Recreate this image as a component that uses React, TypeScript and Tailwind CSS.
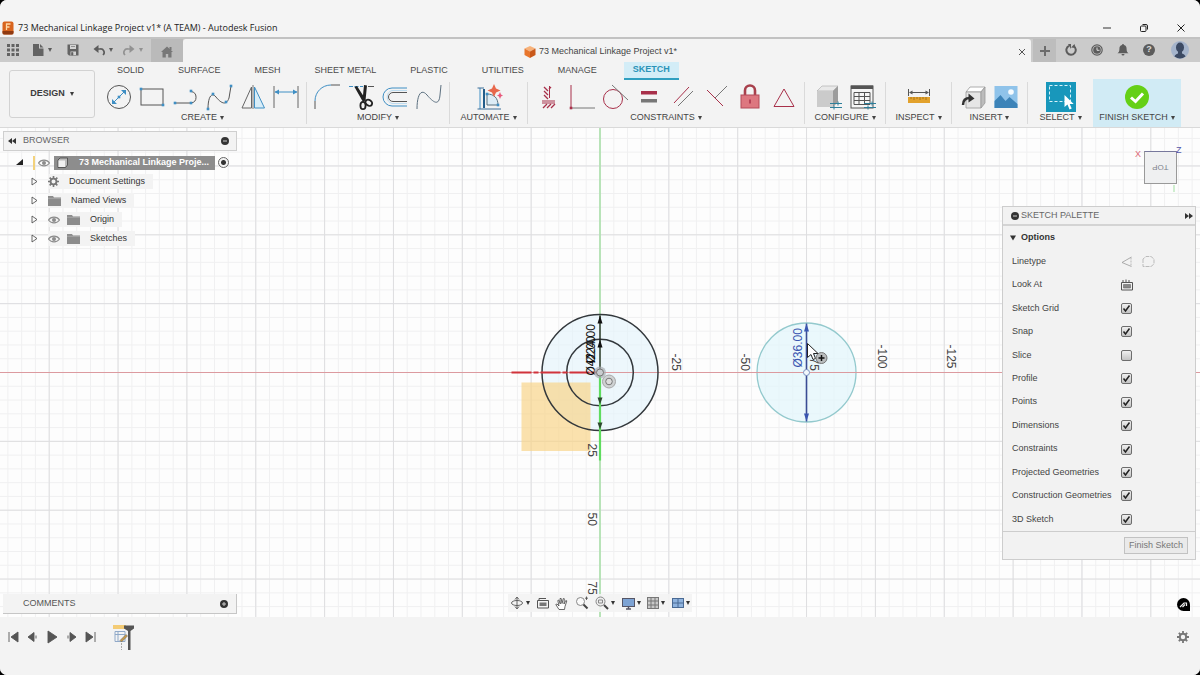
import { useState } from "react";
import type { ReactNode } from "react";

const CELL = 13.77;
const REACH = 1652;
const BLUE = "#3f8fc4";
const CRIMSON = "#a8304a";

type Tool = { id: string; art: ReactNode };
type Group = { label: string; box: string; tools: Tool[] };

const gridPath = (step: number): string => {
  const parts: string[] = [];
  for (let p = 0; p <= REACH; p += step) {
    parts.push(`M${p} -${REACH}V${REACH}M-${p} -${REACH}V${REACH}M-${REACH} ${p}H${REACH}M-${REACH} -${p}H${REACH}`);
  }
  return parts.join("");
};
const minorGrid = gridPath(CELL);
const majorGrid = gridPath(CELL * 5);

const tabs = ["SOLID", "SURFACE", "MESH", "SHEET METAL", "PLASTIC", "UTILITIES", "MANAGE", "SKETCH"];

const dot = (x: number, y: number, fill = BLUE) => <rect x={x - 1.3} y={y - 1.3} width="2.6" height="2.6" fill={fill} />;

const groups: Group[] = [
  {
    label: "CREATE",
    box: "w-[208px] px-[6px]",
    tools: [
      {
        id: "Circle",
        art: (
          <>
            <circle cx="14" cy="14" r="11.5" stroke="#555" />
            <path d="M8 20L20 8" stroke={BLUE} />
            <path d="M7 21v-5l5 5zM21 7v5l-5-5z" fill={BLUE} />
            {dot(14, 14)}
          </>
        ),
      },
      {
        id: "Rectangle",
        art: (
          <>
            <rect x="3" y="6" width="22" height="16" stroke="#555" />
            {dot(3, 6)}
            {dot(25, 22)}
          </>
        ),
      },
      {
        id: "Line",
        art: (
          <>
            <path d="M3 20H19" stroke="#555" />
            <path d="M19 8.500A5.800 5.800 0 0 1 19 20" stroke="#555" />
            {dot(3, 20)}
            {dot(19, 20)}
            {dot(19, 8)}
          </>
        ),
      },
      {
        id: "Spline",
        art: (
          <>
            <path d="M3 26C3 13 7 9 11 14S21 24 24 15L26 3" stroke="#555" />
            {dot(3, 26)}
            {dot(8, 11)}
            {dot(21, 19)}
            {dot(26, 3)}
          </>
        ),
      },
      {
        id: "Mirror",
        art: (
          <>
            <path d="M12.500 4V25H3z" stroke="#666" />
            <path d="M15.500 4V25H25.500z" stroke={BLUE} fill="#d8edf8" />
            <path d="M14 2V26" stroke="#777" />
          </>
        ),
      },
      {
        id: "Dimension",
        art: (
          <>
            <path d="M2 3V25M26 3V25" stroke="#666" />
            <path d="M3 9H25" stroke={BLUE} />
            <path d="M2.500 9l4.500-2.500v5zM25.500 9l-4.500-2.500v5z" fill={BLUE} />
          </>
        ),
      },
    ],
  },
  {
    label: "MODIFY",
    box: "w-[143px] px-[6px]",
    tools: [
      {
        id: "Fillet",
        art: (
          <>
            <path d="M2 26V18" stroke="#555" />
            <path d="M2 18C2 9 9 2 18 2" stroke={BLUE} />
            <path d="M18 2H27" stroke="#555" />
          </>
        ),
      },
      {
        id: "Trim",
        art: (
          <>
            <path d="M2 3.500H16" stroke={BLUE} strokeDasharray="4 1.500" />
            <path d="M21 3.500H27" stroke="#555" />
            <path d="M7.500 4L10 3l9 14-3 2zM17 2l3 .5-1.500 15h-3z" fill="#222" />
            <ellipse cx="16" cy="22.500" rx="2.600" ry="3.600" stroke="#222" strokeWidth="1.800" />
            <ellipse cx="21.800" cy="19.800" rx="3.600" ry="2.800" transform="rotate(35 21.800 19.800)" stroke="#222" strokeWidth="1.800" />
          </>
        ),
      },
      {
        id: "Offset",
        art: (
          <>
            <path d="M26 5H11A9 9 0 0 0 11 23H26" stroke={BLUE} />
            <path d="M26 9.500H12A4.500 4.500 0 0 0 12 18.500H26" stroke="#555" />
            <path d="M26 7.500H11A6.800 6.800 0 0 0 11 20.500H26" stroke="#bddcf0" />
          </>
        ),
      },
      { id: "Edit curve", art: <path d="M2 26C2 12 6 5 12 12S24 24 25 12L26 2" stroke="#5c7080" /> },
    ],
  },
  {
    label: "AUTOMATE",
    box: "w-[78px] px-[25px]",
    tools: [
      {
        id: "AutoConstrain",
        art: (
          <>
            <path d="M5 5V26" stroke={BLUE} />
            <path d="M2.500 5H9M2.500 26H26" stroke="#3d6f98" />
            <path d="M9 6V25" stroke="#235d8a" strokeWidth="2" />
            <path d="M12 11C19 11 23 15 23 22H12z" stroke="#58707f" fill="#dcecf6" />
            {dot(12, 11)}
            {dot(23, 22)}
            <path d="M19 1l2 4.500 4.500 2-4.500 2L19 14l-2-4.500-4.500-2 4.500-2z" fill="#e8684c" />
            <path d="M25 9l1 2.500 2 1-2 1-1 2.500-1-2.500-2-1 2-1z" fill="#e85a7c" />
          </>
        ),
      },
    ],
  },
  {
    label: "CONSTRAINTS",
    box: "w-[277px] px-[6px]",
    tools: [
      {
        id: "Horizontal/Vertical",
        art: (
          <>
            <path d="M15.500 3V15M8 18H21M8 20H21" stroke={CRIMSON} />
            <path d="M10 4l4 4M10 8l4 4M10 12l4 4M17 4l-2 2M9 25l4-4M13 25l4-4M17 25l4-4" stroke={CRIMSON} strokeWidth="1.300" />
          </>
        ),
      },
      {
        id: "Coincident",
        art: (
          <>
            <path d="M3 2V25" stroke={CRIMSON} />
            <path d="M3 25H27" stroke="#777" />
            {dot(3, 25, CRIMSON)}
          </>
        ),
      },
      {
        id: "Tangent",
        art: (
          <>
            <circle cx="12" cy="16" r="9.500" stroke={CRIMSON} />
            <path d="M11 2L27 17" stroke="#777" />
          </>
        ),
      },
      {
        id: "Equal",
        art: (
          <>
            <rect x="6" y="8" width="16" height="3.500" fill={CRIMSON} />
            <rect x="6" y="16" width="16" height="3.500" fill="#777" />
          </>
        ),
      },
      {
        id: "Parallel",
        art: (
          <>
            <path d="M5 20L20 4" stroke={CRIMSON} />
            <path d="M9 23L24 8" stroke="#777" />
          </>
        ),
      },
      {
        id: "Perpendicular",
        art: (
          <>
            <path d="M4 7L20 23" stroke={CRIMSON} />
            <path d="M12 15L24 3" stroke="#777" />
          </>
        ),
      },
      {
        id: "Fix",
        art: (
          <>
            <path d="M9 13V7.500a5 5 0 0 1 10 0V13" stroke="#a8404c" strokeWidth="2.600" />
            <rect x="5" y="12" width="18" height="13" fill="#dd7780" stroke="#b44a58" />
            <path d="M14 16.500v4" stroke="#a8304a" strokeWidth="1.500" />
          </>
        ),
      },
      { id: "Symmetry", art: <path d="M14 6L24 23.500H4z" stroke={CRIMSON} /> },
    ],
  },
  {
    label: "CONFIGURE",
    box: "w-[81px] px-[9px]",
    tools: [
      {
        id: "Configure",
        art: (
          <>
            <path d="M3 8l5-5H24l-5 5z" fill="#e9e9e9" stroke="#aaa" strokeWidth=".6" />
            <path d="M3 8H19V24H3z" fill="#cbcbcb" />
            <path d="M19 8l5-5V19l-5 5z" fill="#9c9c9c" />
            <path d="M16 20.500H28M16 24.500H28M24 18.500v4M20 22.500v4" stroke="#2d7f9a" />
          </>
        ),
      },
      {
        id: "Configuration table",
        art: (
          <>
            <rect x="3" y="3" width="22" height="22" fill="#f7f7f7" stroke="#555" />
            <path d="M3 2.500H25V6H3z" fill="#555" />
            <path d="M6 9.500H22V21.500H6zM6 13.500H22M6 17.500H22M11 9.500V21.500M16.500 9.500V21.500" stroke="#555" />
            <path d="M16 20.500H28M16 24.500H28M24 18.500v4M20 22.500v4" stroke="#2d7f9a" />
          </>
        ),
      },
    ],
  },
  {
    label: "INSPECT",
    box: "w-[66px] px-[19px]",
    tools: [
      {
        id: "Measure",
        art: (
          <>
            <path d="M3.500 6V13M24.500 6V13M5 9.500H23" stroke="#555" />
            <path d="M4 9.500l3.500-2v4zM24 9.500l-3.500-2v4z" fill="#555" />
            <rect x="3" y="14" width="22" height="6" fill="#e2a12c" />
            <path d="M6 14v2M9 14v3M12 14v2M15 14v3M18 14v2M21 14v3" stroke="#9c6a12" strokeWidth=".8" />
          </>
        ),
      },
    ],
  },
  {
    label: "INSERT",
    box: "w-[76px] px-[7px]",
    tools: [
      {
        id: "Insert derive",
        art: (
          <>
            <path d="M7 9l4-5H26l-4 5z" fill="#fff" stroke="#999" strokeWidth=".8" />
            <path d="M7 9H22V25H7z" fill="#e6e6e6" stroke="#999" strokeWidth=".8" />
            <path d="M22 9l4-5V20l-4 5z" fill="#bcbcbc" stroke="#999" strokeWidth=".8" />
            <path d="M4 22c0-4 2-7 7-7" stroke="#333" strokeWidth="2.500" />
            <path d="M9.500 10.500l6 5-6 4z" fill="#333" />
          </>
        ),
      },
      {
        id: "Canvas",
        art: (
          <>
            <rect x="2.500" y="3" width="23" height="22" fill="#8fc3ea" />
            <path d="M2.500 18l6-6 5 6 4-4 8 7v4h-23z" fill="#3c83b8" />
            <circle cx="19" cy="9" r="2.800" fill="#f5fbff" />
          </>
        ),
      },
    ],
  },
];

const options = [
  "Sketch Grid",
  "Snap",
  "Slice",
  "Profile",
  "Points",
  "Dimensions",
  "Constraints",
  "Projected Geometries",
  "Construction Geometries",
  "3D Sketch",
];

function Caret() {
  return (
    <svg viewBox="0 0 4 4" className="size-[4px] shrink-0">
      <path d="M0 0H4L2 4z" fill="currentColor" />
    </svg>
  );
}

function Art({ children, className = "size-[28px]", box = "0 0 28 28" }: { children: ReactNode; className?: string; box?: string }) {
  return (
    <svg viewBox={box} fill="none" className={`shrink-0 ${className}`} aria-hidden="true">
      {children}
    </svg>
  );
}

function TitleBar() {
  return (
    <header className="flex h-[37px] items-center bg-[#f4f4f4] pt-[18px] pr-[14px] pl-[2px]">
      <Art className="h-[14px] w-[12px]" box="0 0 12 14">
        <rect x=".5" y=".5" width="11" height="13" rx="2" fill="#d8641e" />
        <path d="M.5 10H11.500V12a1.500 1.500 0 0 1-1.500 1.500H2A1.500 1.500 0 0 1 .5 12z" fill="#8f3a12" />
        <path d="M4.500 9V3H8.500M4.500 6H7.500" stroke="#ffd9a8" strokeWidth="1.300" />
      </Art>
      <h1 className="ml-[4px] font-['Open_Sans',sans-serif] text-[9px] text-[#222]">
        73 Mechanical Linkage Project v1* (A TEAM) - Autodesk Fusion
      </h1>
      <div className="ml-auto flex items-center gap-[27px]">
        <button type="button" aria-label="Minimize">
          <Art className="size-[10px]" box="0 0 10 10">
            <path d="M1 5H9" stroke="#333" />
          </Art>
        </button>
        <button type="button" aria-label="Restore">
          <Art className="size-[10px]" box="0 0 10 10">
            <rect x="1.500" y="3" width="5.500" height="5.500" rx="1" stroke="#222" />
            <path d="M3.500 1.500H7a1.500 1.500 0 0 1 1.500 1.500V6.500" stroke="#222" />
          </Art>
        </button>
        <button type="button" aria-label="Close">
          <Art className="size-[10px]" box="0 0 10 10">
            <path d="M1.500 1.500L8.500 8.500M8.500 1.500L1.500 8.500" stroke="#222" />
          </Art>
        </button>
      </div>
    </header>
  );
}

function DocumentBar() {
  return (
    <div className="flex h-[25px] items-stretch border-t-2 border-[#c2c2c2] bg-[#cbcbcb] text-[#5c5c5c]">
      <div className="flex w-[151px] items-center pb-[2px] pl-[7px]">
        <button type="button" aria-label="Data panel">
          <Art className="size-[12px]" box="0 0 12 12">
            <path d="M0 0h3v3H0zM4.500 0h3v3h-3zM9 0h3v3H9zM0 4.500h3v3H0zM4.500 4.500h3v3h-3zM9 4.500h3v3H9zM0 9h3v3H0zM4.500 9h3v3h-3zM9 9h3v3H9z" fill="#636363" />
          </Art>
        </button>
        <button type="button" aria-label="File" className="ml-[13px] flex items-center gap-[4px]">
          <Art className="size-[12px]" box="0 0 12 12">
            <path d="M1 0H7V4.500H11.500V12H1zM8 0L11.500 3.500H8z" fill="#636363" />
          </Art>
          <Caret />
        </button>
        <button type="button" aria-label="Save" className="ml-[15px]">
          <Art className="size-[12px]" box="0 0 12 12">
            <path d="M.5 .5H11.500V11.500H2L.5 10z" fill="#636363" />
            <path d="M3 1H9V5H3zM3.500 7.500H9V11H3.500z" fill="#d4d4d4" />
            <path d="M4.500 8.500H6V11H4.500zM4 2.500H8" fill="#636363" stroke="#636363" strokeWidth=".6" />
          </Art>
        </button>
        <button type="button" aria-label="Undo" className="ml-[14px] flex items-center gap-[4px]">
          <Art className="size-[12px]" box="0 0 12 12">
            <path d="M3 5H7A3.500 3.500 0 0 1 10 11" stroke="#5c5c5c" strokeWidth="1.700" />
            <path d="M5.500 1V9L.5 5z" fill="#5c5c5c" />
          </Art>
          <Caret />
        </button>
        <button type="button" aria-label="Redo" className="ml-[10px] flex items-center gap-[4px] text-[#929292]">
          <Art className="size-[12px]" box="0 0 12 12">
            <path d="M9 5H5A3.500 3.500 0 0 0 2 11" stroke="currentColor" strokeWidth="1.700" />
            <path d="M6.500 1V9L11.500 5z" fill="currentColor" />
          </Art>
          <Caret />
        </button>
      </div>
      <button type="button" aria-label="Home" className="flex w-[32px] items-center justify-center bg-[#bababa] pt-[2px]">
        <Art className="size-[12px]" box="0 0 12 12">
          <path d="M6 .5L12 6H10.500V11.500H7.200V8H4.800V11.500H1.500V6H0z" fill="#777" />
          <path d="M8.500 1H10.500V4H8.500z" fill="#777" />
        </Art>
      </button>
      <div className="flex flex-1 items-center justify-center rounded-t-[3px] bg-[#f3f3f3] pt-[2px] pr-[5px]">
        <span className="ml-auto flex items-center gap-[3px] text-[9px] text-[#444]">
          <Art className="size-[12px]" box="0 0 12 12">
            <path d="M6 0l5.500 2.500L6 5.500 .5 2.500z" fill="#f7b27a" />
            <path d="M.5 2.500L6 5.500V12L.5 9z" fill="#e8762c" />
            <path d="M11.500 2.500L6 5.500V12l5.500-3z" fill="#c9581a" />
          </Art>
          73 Mechanical Linkage Project v1*
        </span>
        <button type="button" aria-label="Close tab" className="ml-auto">
          <Art className="size-[8px]" box="0 0 8 8">
            <path d="M1 1L7 7M7 1L1 7" stroke="#555" />
          </Art>
        </button>
      </div>
      <button type="button" aria-label="New tab" className="ml-[2px] flex w-[23px] items-center justify-center bg-[#bdbdbd]">
        <Art className="size-[10px]" box="0 0 10 10">
          <path d="M5 0V10M0 5H10" stroke="#6c6c6c" strokeWidth="2" />
        </Art>
      </button>
      <div className="flex items-center gap-[14px] pr-[11px] pb-[2px] pl-[9px]">
        <button type="button" aria-label="Extensions">
          <Art className="size-[12px]" box="0 0 12 12">
            <path d="M4 1.800A4.700 4.700 0 1 0 8.500 2" stroke="#5c5c5c" strokeWidth="2" />
            <path d="M3 0H6V5zM6 3.500L9.500 0 10.500 4z" fill="#5c5c5c" />
          </Art>
        </button>
        <button type="button" aria-label="Job status">
          <Art className="size-[12px]" box="0 0 12 12">
            <circle cx="6" cy="6" r="5.200" stroke="#5c5c5c" strokeWidth="1.200" />
            <circle cx="6" cy="6" r="3.800" fill="#5c5c5c" />
            <path d="M6 3.500V6.300H8.500" stroke="#ddd" />
          </Art>
        </button>
        <button type="button" aria-label="Notifications">
          <Art className="size-[12px]" box="0 0 12 12">
            <path d="M6 0a1 1 0 0 1 1 1c2 .5 2.600 2 2.600 4 0 2.500 .6 3.200 1.900 4.300H.5C1.800 8.200 2.400 7.500 2.400 5c0-2 .6-3.500 2.600-4a1 1 0 0 1 1-1zM4.500 10h3a1.500 1.500 0 0 1-3 0z" fill="#5c5c5c" />
          </Art>
        </button>
        <button type="button" aria-label="Help" className="flex size-[12px] items-center justify-center rounded-full bg-[#5c5c5c] text-[9px] font-bold text-[#ddd]">
          ?
        </button>
        <button type="button" aria-label="Account" className="ml-[2px]">
          <Art className="size-[18px]" box="0 0 18 18">
            <circle cx="9" cy="9" r="9" fill="#a5b4cb" />
            <ellipse cx="9" cy="6.500" rx="4" ry="5" fill="#3c4a63" />
            <path d="M7 10h4v2.500c2 .5 3 1.500 3.500 3A9 9 0 0 1 3.500 15.500C4 14 5 13 7 12.500z" fill="#3c4a63" />
          </Art>
        </button>
      </div>
    </div>
  );
}

function GroupLabel({ children }: { children: ReactNode }) {
  return (
    <span className="flex h-[12px] items-center justify-center gap-[3px] text-[9px] whitespace-nowrap text-[#444]">
      {children}
      <Caret />
    </span>
  );
}

function Ribbon() {
  const [active, setActive] = useState("SKETCH");

  return (
    <div className="flex h-[66px] border-b border-[#d9d9d9] bg-[#f3f3f3] pl-[9px]">
      <button
        type="button"
        className="mt-[8px] flex h-[48px] w-[86px] shrink-0 items-center justify-center gap-[5px] rounded-[3px] border border-[#d2d2d2] text-[9px] font-bold text-[#3c3c3c]"
      >
        DESIGN
        <Caret />
      </button>
      <div className="flex flex-1 flex-col pl-[4px]">
        <nav className="flex h-[18px] items-stretch gap-[34px] pl-[18px]">
          {tabs.map((tab) => (
            <button
              key={tab}
              type="button"
              onClick={() => setActive(tab)}
              className={
                tab === active
                  ? "-mx-[7px] border-b-2 border-[#2f9fc0] bg-[#d3edf7] px-[9px] text-[9px] font-bold text-[#2a93b8]"
                  : "text-[9px] whitespace-nowrap text-[#4a4a4a]"
              }
            >
              {tab}
            </button>
          ))}
        </nav>
        <div className="flex flex-1">
          {groups.map((group) => (
            <section key={group.label} className={`mt-[2px] mb-[3px] shrink-0 border-r border-[#dadada] ${group.box}`}>
              <div className="flex h-[29px] items-center justify-between">
                {group.tools.map((tool) => (
                  <button key={tool.id} type="button" aria-label={tool.id}>
                    <Art>{tool.art}</Art>
                  </button>
                ))}
              </div>
              <button type="button" className="flex w-full justify-center pt-px">
                <GroupLabel>{group.label}</GroupLabel>
              </button>
            </section>
          ))}
          <button type="button" className="w-[65px] shrink-0 pb-[2px]">
            <Art className="mx-auto size-[30px]" box="0 0 30 30">
              <rect width="30" height="30" fill="#1897bb" />
              <path d="M3.500 3.500H24.500V19.500H3.500z" stroke="#d8f2fa" strokeDasharray="3 2" />
              <path d="M18.500 13V25l3-2.500 2 5 2.200-1-2-4.500h4z" fill="#fff" />
            </Art>
            <GroupLabel>SELECT</GroupLabel>
          </button>
          <button type="button" className="-mt-px w-[88px] shrink-0 bg-[#d1ebf5]">
            <Art className="mx-auto size-[30px]" box="0 0 30 30">
              <circle cx="15" cy="15" r="12" fill="#65d016" />
              <path d="M9 15.500L13.500 19.500 21 11.500" stroke="#fff" strokeWidth="3" />
            </Art>
            <GroupLabel>FINISH SKETCH</GroupLabel>
          </button>
        </div>
      </div>
    </div>
  );
}

function SketchCanvas() {
  return (
    <svg className="absolute inset-0 size-full bg-[#fdfdfd]" fill="none" role="img" aria-label="Sketch canvas">
      <svg x="50%" y="50%" overflow="visible">
        <path d={minorGrid} stroke="#f0f0f1" />
        <path d={majorGrid} stroke="#dedee0" />
        <circle r="58" fill="#e3f3fb" fillOpacity=".6" />
        <circle cx="206.500" r="49.500" fill="#e3f6fb" fillOpacity=".75" stroke="#93c9cd" strokeWidth="1.300" />
        <rect x="-78.500" y="10" width="69" height="68.500" fill="#f8d48a" fillOpacity=".7" />
        <path d={`M-${REACH} 0H${REACH}`} stroke="#dc9a9f" strokeWidth="1.200" />
        <path d={`M0 -${REACH}V${REACH}`} stroke="#a5e3a5" strokeWidth="1.400" />
        <circle r="58" stroke="#33383c" strokeWidth="1.500" />
        <circle r="33.300" stroke="#33383c" strokeWidth="1.500" />
        <path d="M-88.500 0H0" stroke="#d1333b" strokeWidth="2" strokeDasharray="20 2 5 2" />
        <path d="M0 0V88" stroke="#5fdc5f" strokeWidth="2.200" />
        <path d="M0 -57V0" stroke="#222" strokeWidth="1.300" />
        <path d="M0 -57l2.500 8h-5zM0 -33l2.500 8h-5z" fill="#111" />
        <path d="M0 57l2.500-7h-5zM0 32l2.500-7h-5z" fill="#2d4a2d" />
        <g fontFamily="'Liberation Sans', sans-serif" fontSize="12" fill="#444">
          <text transform="translate(71.500 -19) rotate(90)">-25</text>
          <text transform="translate(140.500 -19) rotate(90)">-50</text>
          <text transform="translate(209.500 -19) rotate(90)">-75</text>
          <text transform="translate(278 -28) rotate(90)">-100</text>
          <text transform="translate(347 -28) rotate(90)">-125</text>
          <text transform="translate(-12 71) rotate(90)">25</text>
          <text transform="translate(-12 140) rotate(90)">50</text>
          <text transform="translate(-12 209) rotate(90)">75</text>
          <text transform="translate(-5 3) rotate(-90)" fill="#111">Ø42.00</text>
          <text transform="translate(-5 -9) rotate(-90)" fill="#111">Ø24.00</text>
          <text transform="translate(202 -5) rotate(-90)" fill="#3a56b0">Ø36.00</text>
        </g>
        <circle r="6" fill="#a8adb0" fillOpacity=".7" />
        <circle r="3.500" fill="#c9cdd0" stroke="#777" />
        <circle cx="9" cy="9" r="6.500" fill="#cfd2d3" stroke="#a7a7a7" />
        <circle cx="9" cy="9" r="3.300" fill="#ddd" stroke="#777" />
        <path d="M206.500 -49V49" stroke="#3a4c94" strokeWidth="1.600" />
        <path d="M206.500 -49l2.500 8h-5zM206.500 49l2.500-8h-5z" fill="#3a56b0" />
        <circle cx="206.500" r="3" fill="#f2f8fc" stroke="#7b8fc0" />
        <path d="M207.500 -29V-15l3.500-3 2 5 2.500-1-2-5h4.500z" fill="#fff" stroke="#222" />
        <circle cx="221.500" cy="-14.500" r="5.500" fill="#b9bcbd" stroke="#777" />
        <path d="M221.500 -17.500v6M218.500 -14.500h6" stroke="#111" strokeWidth="1.500" />
      </svg>
    </svg>
  );
}

function Eye() {
  return (
    <Art className="h-[8px] w-[12px]" box="0 0 12 8">
      <path d="M.5 4C3 .2 9 .2 11.500 4 9 7.800 3 7.800 .5 4z" stroke="#8c8c8c" strokeWidth="1.200" />
      <circle cx="6" cy="4" r="2" fill="#8c8c8c" />
    </Art>
  );
}

function Folder() {
  return (
    <Art className="h-[10px] w-[13px]" box="0 0 13 10">
      <path d="M0 0H5L6 1.500H13V10H0z" fill="#8c8c8c" />
      <path d="M0 2.300H13" stroke="#b5b5b5" strokeWidth=".7" />
    </Art>
  );
}

function Gear({ className = "size-[12px]" }: { className?: string }) {
  return (
    <Art className={className} box="0 0 12 12">
      <circle cx="6" cy="6" r="3.200" stroke="#777" strokeWidth="2" />
      <path d="M6 0V2.500M6 9.500V12M0 6H2.500M9.500 6H12M1.800 1.800L3.500 3.500M8.500 8.500L10.200 10.200M10.200 1.800L8.500 3.500M3.500 8.500L1.800 10.200" stroke="#777" strokeWidth="1.800" />
    </Art>
  );
}

function TreeRow({ label, icon, eye = false }: { label: string; icon: ReactNode; eye?: boolean }) {
  return (
    <li className="flex h-[19px] items-center">
      <button type="button" aria-label={`Expand ${label}`} className="mr-[10px] ml-[28px]">
        <Art className="h-[9px] w-[7px]" box="0 0 7 9">
          <path d="M1 1V8L6 4.500z" stroke="#444" strokeWidth=".8" />
        </Art>
      </button>
      <span className="flex h-[15px] items-center gap-[7px] bg-[#f3f3f3] pr-[8px] text-[9px] text-[#333]">
        {eye && <Eye />}
        {icon}
        <span className="pl-[3px]">{label}</span>
      </span>
    </li>
  );
}

function Knob({ plus = false }: { plus?: boolean }) {
  return (
    <Art className="size-[8px]" box="0 0 8 8">
      <circle cx="4" cy="4" r="4" fill="#333" />
      <path d={plus ? "M2 4H6M4 2V6" : "M2 4H6"} stroke="#ccc" />
    </Art>
  );
}

function BrowserPanel() {
  return (
    <aside className="absolute top-[3px] left-[3px] w-[234px]">
      <div className="flex h-[20px] items-center border border-[#cfcfcf] bg-[#f3f3f3] px-[4px] text-[9px] text-[#666]">
        <Art className="h-[6px] w-[8px]" box="0 0 8 6">
          <path d="M4 0V6L0 3zM8 0V6L4 3z" fill="#333" />
        </Art>
        <span className="ml-[7px]">BROWSER</span>
        <button type="button" aria-label="Collapse browser" className="mr-[3px] ml-auto">
          <Knob />
        </button>
      </div>
      <div className="mt-[2px] flex h-[19px] items-center pl-[13px]">
        <Art className="size-[7px]" box="0 0 7 7">
          <path d="M7 0V6H0z" fill="#222" />
        </Art>
        <span className="mr-[3px] ml-[10px] h-[14px] w-[2px] bg-[#f3d27c]" />
        <Eye />
        <span className="ml-[4px] flex h-[14px] w-[161px] items-center bg-[#8d8d8d] pl-[3px] text-[9px] font-bold whitespace-nowrap text-white">
          <Art className="size-[11px]" box="0 0 11 11">
            <path d="M1 3l2-2H10.500V8L8.500 10.500H1z" fill="#bbb" stroke="#444" strokeWidth=".8" />
            <path d="M1.500 3.500H8V10H1.500z" fill="#f0f0f0" />
          </Art>
          <span className="ml-[11px]">73 Mechanical Linkage Proje...</span>
        </span>
        <input
          type="radio"
          name="active-component"
          aria-label="Activate component"
          defaultChecked
          className="ml-[3px] size-[11px] appearance-none rounded-full border border-[#666] bg-[#f3f3f3] checked:bg-[radial-gradient(circle,#333_0_2px,#f3f3f3_3px)]"
        />
      </div>
      <ul>
        <TreeRow label="Document Settings" icon={<Gear className="size-[11px]" />} />
        <TreeRow label="Named Views" icon={<Folder />} />
        <TreeRow label="Origin" icon={<Folder />} eye />
        <TreeRow label="Sketches" icon={<Folder />} eye />
      </ul>
    </aside>
  );
}

function CheckRow({ label }: { label: string }) {
  const [checked, setChecked] = useState(label !== "Slice");

  return (
    <label className="flex items-center">
      <span className="w-[109px] whitespace-nowrap">{label}</span>
      <span className="relative size-[11px]">
        <input
          type="checkbox"
          checked={checked}
          onChange={() => setChecked(!checked)}
          className="block size-[11px] appearance-none rounded-[2px] border border-[#6d6d6d] bg-linear-to-b from-[#f0f0f0] to-[#c4c4c4]"
        />
        {checked && (
          <Art className="pointer-events-none absolute top-0 left-0 size-[11px]" box="0 0 11 11">
            <path d="M2.500 5.500L4.500 8 8.500 2.500" stroke="#222" strokeWidth="1.500" />
          </Art>
        )}
      </span>
    </label>
  );
}

function SketchPalette() {
  return (
    <aside className="absolute top-[78px] right-[4px] w-[194px] border border-[#cdcdcd] bg-[#f2f2f2] text-[9px] text-[#444]">
      <div className="flex h-[19px] items-center border-b-2 border-[#d4d4d4] px-[8px] text-[#666]">
        <Knob />
        <h2 className="ml-[2px]">SKETCH PALETTE</h2>
        <Art className="-mr-[6px] ml-auto h-[6px] w-[8px]" box="0 0 8 6">
          <path d="M0 0V6L4 3zM4 0V6L8 3z" fill="#333" />
        </Art>
      </div>
      <button type="button" className="flex h-[24px] items-center gap-[5px] pl-[7px] font-bold text-[#333]">
        <Art className="size-[6px]" box="0 0 6 6">
          <path d="M0 .5H6L3 5.500z" fill="#333" />
        </Art>
        Options
      </button>
      <div className="grid h-[281px] auto-rows-fr pl-[9px]">
        <div className="flex items-center">
          <span className="w-[109px]">Linetype</span>
          <button type="button" aria-label="Construction">
            <Art className="size-[12px]" box="0 0 12 12">
              <path d="M10.500 1L1 6.500 10.500 10.500" stroke="#999" strokeWidth=".8" />
              <path d="M10 1.500V10" stroke="#aaa" strokeWidth=".8" strokeDasharray="2 1" />
            </Art>
          </button>
          <button type="button" aria-label="Centerline" className="ml-[9px]">
            <Art className="size-[13px]" box="0 0 13 13">
              <path d="M1 4V11.500H9L12 9V4L9 1.500H4L1 4" stroke="#bbb" strokeDasharray="4 1" />
            </Art>
          </button>
        </div>
        <div className="flex items-center">
          <span className="w-[109px]">Look At</span>
          <button type="button" aria-label="Look At">
            <Art className="size-[12px]" box="0 0 12 12">
              <path d="M.5 3.500H11.500V11H.5zM2 3V1M5 3V.5M8 3V1" stroke="#555" />
              <path d="M2.500 5.500H9.500V9H2.500z" fill="#888" stroke="#666" strokeWidth=".6" />
            </Art>
          </button>
        </div>
        {options.map((label) => (
          <CheckRow key={label} label={label} />
        ))}
      </div>
      <div className="flex justify-end border-t border-[#cdcdcd] px-[7px] py-[5px]">
        <button type="button" className="h-[17px] border border-[#c2c2c2] bg-[#eaeaea] px-[4px] text-[#777]">
          Finish Sketch
        </button>
      </div>
    </aside>
  );
}

function ViewCube() {
  return (
    <div className="absolute top-[15px] right-[18px]">
      <Art className="h-[52px] w-[50px]" box="0 0 50 52">
        <rect x="12.500" y="8.500" width="32" height="32" fill="#eff0f1" stroke="#999" />
        <path d="M12.500 8.500H44.500" stroke="#77789c" />
        <path d="M42 42V49" stroke="#bfe8bf" strokeWidth="1.500" />
        <g fontFamily="'Liberation Sans', sans-serif" fontSize="9">
          <text x="3" y="14" fill="#dd6a78">X</text>
          <text x="44" y="10" fill="#5555aa">Z</text>
          <text fontSize="8" transform="translate(36.500 22) rotate(180)" fill="#7d838c">TOP</text>
        </g>
      </Art>
    </div>
  );
}

function NavBar() {
  return (
    <div className="absolute bottom-[5px] left-1/2 -ml-[92px] flex h-[18px] w-[184px] items-center justify-between bg-[#f3f3f3]/90 px-[2px] text-[#333]">
      <button type="button" aria-label="Orbit" className="flex items-center gap-[2px]">
        <Art className="size-[14px]" box="0 0 14 14">
          <ellipse cx="7" cy="7" rx="5.500" ry="2.500" stroke="#666" />
          <path d="M7 1.500V12.500M5 3.500L7 1 9 3.500M5 10.500L7 13 9 10.500" stroke="#555" strokeWidth=".9" />
        </Art>
        <Caret />
      </button>
      <button type="button" aria-label="Look At">
        <Art className="size-[12px]" box="0 0 12 12">
          <path d="M.5 3.500H11.500V11H.5zM2 3V1.500H9" stroke="#555" />
          <path d="M2.500 5.500H9.500V9H2.500z" fill="#777" />
        </Art>
      </button>
      <button type="button" aria-label="Pan">
        <Art className="size-[13px]" box="0 0 13 13">
          <path d="M4 12.500L.8 7.500 2 7l2 2L2.800 3.500l1-.5L5.300 7 5 1.500h1.200L7 6.500 8.300 1.500l1 .2L9 7l1.800-3.500 1 .4L10 9.500 9.500 12.500z" fill="#fff" stroke="#444" strokeWidth=".8" />
        </Art>
      </button>
      <button type="button" aria-label="Zoom">
        <Art className="size-[14px]" box="0 0 14 14">
          <circle cx="5.500" cy="5.500" r="4" fill="#fafafa" stroke="#888" />
          <path d="M8.500 8.500L12.500 12.500" stroke="#444" strokeWidth="2" />
          <path d="M11.500 .5V4M10 2.200H13" stroke="#444" strokeWidth=".8" />
        </Art>
      </button>
      <button type="button" aria-label="Zoom window" className="flex items-center gap-[2px]">
        <Art className="size-[14px]" box="0 0 14 14">
          <circle cx="5.500" cy="5.500" r="4.500" fill="#eee" stroke="#888" />
          <path d="M3.500 4H7.500V7H3.500z" stroke="#888" />
          <path d="M9 9L13 13" stroke="#444" strokeWidth="2" />
        </Art>
        <Caret />
      </button>
      <button type="button" aria-label="Display settings" className="flex items-center gap-[2px]">
        <Art className="size-[13px]" box="0 0 13 13">
          <rect x=".5" y="1.500" width="12" height="8" fill="#7da3d4" stroke="#556" />
          <path d="M4 12H9M6.500 9.500V12" stroke="#556" strokeWidth="1.500" />
        </Art>
        <Caret />
      </button>
      <button type="button" aria-label="Grid and snaps" className="flex items-center gap-[2px]">
        <Art className="size-[12px]" box="0 0 12 12">
          <rect width="12" height="12" fill="#c9c9c9" />
          <path d="M0 .5H12M0 4H12M0 8H12M0 11.500H12M.5 0V12M4 0V12M8 0V12M11.500 0V12" stroke="#777" />
        </Art>
        <Caret />
      </button>
      <button type="button" aria-label="Viewports" className="flex items-center gap-[2px]">
        <Art className="size-[12px]" box="0 0 12 12">
          <rect x=".5" y="1.500" width="11" height="9" fill="#8fb3de" stroke="#4a6a94" />
          <path d="M6 1.500V10.500M.5 6H11.500" stroke="#4a6a94" />
        </Art>
        <Caret />
      </button>
    </div>
  );
}

function Timeline() {
  const controls = [
    { id: "Go to start", d: "M2 2V12M11 2V12L4 7z" },
    { id: "Step back", d: "M8 2.500V11.500L2 7zM10 5.500V8.500" },
    { id: "Play", d: "M3 1V13L12 7z" },
    { id: "Step forward", d: "M6 2.500V11.500L12 7zM4 5.500V8.500" },
    { id: "Go to end", d: "M12 2V12M3 2V12L10 7z" },
  ];

  return (
    <footer className="flex h-[58px] items-start bg-[#f3f3f3] pt-[6px] pr-[11px] pl-[6px]">
      <div className="flex items-center gap-[5px] pt-[7px] pl-px">
        {controls.map((control) => (
          <button key={control.id} type="button" aria-label={control.id}>
            <Art className="size-[14px]" box="0 0 14 14">
              <path d={control.d} fill="#555" stroke="#555" strokeWidth=".9" />
            </Art>
          </button>
        ))}
      </div>
      <button type="button" aria-label="Sketch1" className="ml-[15px]">
        <Art className="h-[28px] w-[24px]" box="0 0 24 28">
          <rect x="1" y="2" width="13" height="4" fill="#f3cb75" />
          <path d="M3 8.500H13V18.500H3zM3 11.500H13M6 8.500V18.500" stroke="#90a9c8" />
          <path d="M8 17.500L14 11.500l1.500 1.500L9.500 19z" fill="#c99a45" stroke="#666" strokeWidth=".6" />
          <path d="M9.500 20V27" stroke="#aaa" strokeDasharray="2 1" />
          <path d="M12 2.500H22V5.500L18.500 8V27H16V8L12 5.500z" fill="#555" />
        </Art>
      </button>
      <button type="button" aria-label="Timeline settings" className="mt-[8px] ml-auto">
        <Gear />
      </button>
    </footer>
  );
}

function App() {
  return (
    <div className="min-h-screen bg-black">
      <div className="flex min-h-screen flex-col overflow-hidden rounded-[7px] bg-[#f3f3f3] font-['Liberation_Sans',Arial,sans-serif]">
        <TitleBar />
        <DocumentBar />
        <Ribbon />
        <main className="relative min-h-[480px] flex-1 overflow-hidden">
          <SketchCanvas />
          <BrowserPanel />
          <ViewCube />
          <SketchPalette />
          <div className="absolute bottom-[3px] left-[3px] flex h-[20px] w-[234px] items-center border-r border-b border-[#c6c6c6] bg-[#f3f3f3] pr-[8px] pl-[20px] text-[9px] text-[#555]">
            COMMENTS
            <button type="button" aria-label="Expand comments" className="ml-auto">
              <Knob plus />
            </button>
          </div>
          <NavBar />
          <button
            type="button"
            aria-label="Assistant"
            className="absolute right-[10px] bottom-[6px] flex size-[13px] items-center justify-center rounded-full rounded-br-[3px] bg-black"
          >
            <Art className="size-[9px]" box="0 0 9 9">
              <path d="M1 7L5 3H7.500V6M3.500 7L6 4.500" stroke="#eee" strokeWidth="1.200" />
            </Art>
          </button>
        </main>
        <Timeline />
      </div>
    </div>
  );
}

export default App;
